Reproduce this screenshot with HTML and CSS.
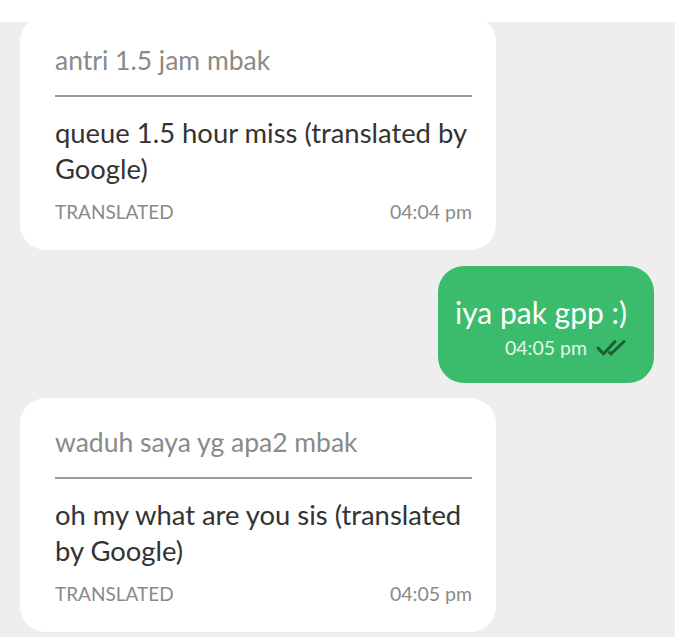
FILE: index.html
```html
<!DOCTYPE html>
<html>
<head>
    <title>Chat</title>
    <link rel="stylesheet" href="styles.css">
</head>
<body>
    <div class="top-bar"></div>
    <div class="chat">
        <div class="bubble incoming first">
            <div class="original">antri 1.5 jam mbak</div>
            <div class="translated">queue 1.5 hour miss (translated by Google)</div>
            <div class="meta">
                <span class="label">TRANSLATED</span>
                <span class="time">04:04 pm</span>
            </div>
        </div>

        <div class="bubble outgoing">
            <div class="text">iya pak gpp :)</div>
            <div class="meta-out">
                <span class="time">04:05 pm</span>
                <svg class="ticks" width="32" height="18" viewBox="0 0 32 18">
                    <path d="M3 9 L8.5 15 L20 2.5" fill="none" stroke="#17613a" stroke-width="3" stroke-linecap="round" stroke-linejoin="round"/>
                    <path d="M14.5 13.5 L16 15 L29 2.5" fill="none" stroke="#17613a" stroke-width="3" stroke-linecap="round" stroke-linejoin="round"/>
                </svg>
            </div>
        </div>

        <div class="bubble incoming">
            <div class="original">waduh saya yg apa2 mbak</div>
            <div class="translated">oh my what are you sis (translated by Google)</div>
            <div class="meta">
                <span class="label">TRANSLATED</span>
                <span class="time">04:05 pm</span>
            </div>
        </div>
    </div>
</body>
</html>
```

FILE: styles.css
```css
body {
    margin: 0;
    background: #eeeeee;
    font-family: Lato, "Liberation Sans", sans-serif;
    height: 637px;
    overflow: hidden;
}

.top-bar {
    height: 22px;
    background: #ffffff;
    position: relative;
    z-index: 2;
}

.chat {
    display: flex;
    flex-direction: column;
    gap: 16px;
    padding: 0 21px 0 20px;
}

.bubble {
    border-radius: 26px;
    box-sizing: border-box;
}

.incoming {
    background: #ffffff;
    width: 476px;
    padding: 28px 24px 26px 35px;
}

.incoming.first {
    margin-top: -6px;
}

.original {
    font-size: 26.5px;
    line-height: 32px;
    color: #8a8a8a;
    padding-bottom: 19px;
    border-bottom: 2px solid #9a9a9a;
}

.translated {
    font-size: 27.4px;
    line-height: 36px;
    color: #333333;
    margin-top: 18px;
}

.meta {
    display: flex;
    justify-content: space-between;
    margin-top: 13px;
    font-size: 19px;
    line-height: 24px;
    color: #8a8a8a;
}

.meta .time {
    font-size: 19.5px;
}

.outgoing {
    align-self: flex-end;
    background: #3bbc6c;
    color: #ffffff;
    padding: 30px 27px 23px 17px;
    margin-bottom: -1px;
    text-align: right;
}

.outgoing .text {
    font-size: 30px;
    line-height: 32px;
}

.meta-out {
    display: flex;
    justify-content: flex-end;
    align-items: center;
    gap: 8px;
    margin-top: 8px;
    font-size: 19.5px;
    line-height: 24px;
    color: #e4f6ea;
}
```
